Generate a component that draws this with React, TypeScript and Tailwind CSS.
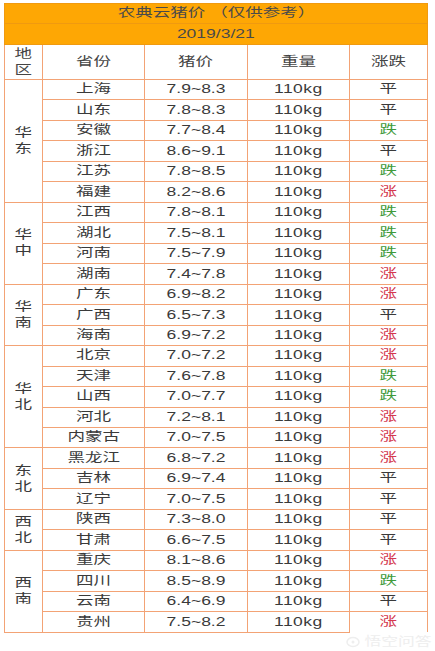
import React from "react";

type Row = [string, string, string];
const groups: { region: string; rows: Row[] }[] = [
  { region: "华东", rows: [["上海", "7.9~8.3", "平"], ["山东", "7.8~8.3", "平"], ["安徽", "7.7~8.4", "跌"], ["浙江", "8.6~9.1", "平"], ["江苏", "7.8~8.5", "跌"], ["福建", "8.2~8.6", "涨"]] },
  { region: "华中", rows: [["江西", "7.8~8.1", "跌"], ["湖北", "7.5~8.1", "跌"], ["河南", "7.5~7.9", "跌"], ["湖南", "7.4~7.8", "涨"]] },
  { region: "华南", rows: [["广东", "6.9~8.2", "涨"], ["广西", "6.5~7.3", "平"], ["海南", "6.9~7.2", "涨"]] },
  { region: "华北", rows: [["北京", "7.0~7.2", "涨"], ["天津", "7.6~7.8", "跌"], ["山西", "7.0~7.7", "跌"], ["河北", "7.2~8.1", "涨"], ["内蒙古", "7.0~7.5", "涨"]] },
  { region: "东北", rows: [["黑龙江", "6.8~7.2", "涨"], ["吉林", "6.9~7.4", "平"], ["辽宁", "7.0~7.5", "平"]] },
  { region: "西北", rows: [["陕西", "7.3~8.0", "平"], ["甘肃", "6.6~7.5", "平"]] },
  { region: "西南", rows: [["重庆", "8.1~8.6", "涨"], ["四川", "8.5~8.9", "跌"], ["云南", "6.4~6.9", "平"], ["贵州", "7.5~8.2", "涨"]] },
];

function T({ children, className = "" }: { children: React.ReactNode; className?: string }) {
  return <span className={"inline-block scale-x-[1.4] whitespace-nowrap " + className}>{children}</span>;
}

function Stack({ text }: { text: string }) {
  return (
    <div className="flex flex-col items-center leading-[16px]">
      {text.split("").map((c, i) => (
        <T key={i}>{c}</T>
      ))}
    </div>
  );
}

const cell = "border border-[#f3a375] p-0 text-center align-middle";
const hcell = "border border-[#f09a10] p-0 text-center align-middle bg-[#fea704] text-[#4a4a4a]";

function trendColor(t: string) {
  if (t === "涨") return "text-[#d4394f]";
  if (t === "跌") return "text-[#3e9a3a]";
  return "text-[#3a3a3a]";
}

export default function App() {
  const total = groups.reduce((a, g) => a + g.rows.length, 0);
  let idx = 0;
  return (
    <div
      className="relative w-[435px] h-[651px] bg-white overflow-hidden pt-[3px] pl-[4px] text-[12.5px] text-[#3a3a3a]"
      style={{ fontFamily: '"Liberation Sans", "Noto Sans CJK SC", sans-serif' }}
    >
      <table className="border-collapse table-fixed w-[423px]">
        <colgroup>
          <col className="w-[38px]" />
          <col className="w-[102px]" />
          <col className="w-[103px]" />
          <col className="w-[102px]" />
          <col className="w-[78px]" />
        </colgroup>
        <tbody>
          <tr className="h-[20px]">
            <td colSpan={5} className={hcell}>
              <T>农典云猪价 （仅供参考）</T>
            </td>
          </tr>
          <tr className="h-[21px]">
            <td colSpan={5} className={hcell}>
              <T>2019/3/21</T>
            </td>
          </tr>
          <tr className="h-[35px] text-[#444]">
            <td className={cell}>
              <Stack text="地区" />
            </td>
            <td className={cell}>
              <T>省份</T>
            </td>
            <td className={cell}>
              <T>猪价</T>
            </td>
            <td className={cell}>
              <T>重量</T>
            </td>
            <td className={cell}>
              <T>涨跌</T>
            </td>
          </tr>
          {groups.map((g) =>
            g.rows.map((r, i) => {
              idx++;
              const last = idx === total;
              return (
                <tr key={g.region + i} className="h-[20.48px]">
                  {i === 0 && (
                    <td rowSpan={g.rows.length} className={cell}>
                      <Stack text={g.region} />
                    </td>
                  )}
                  <td className={cell}>
                    <T>{r[0]}</T>
                  </td>
                  <td className={cell}>
                    <T>{r[1]}</T>
                  </td>
                  <td className={cell}>
                    <T className="tracking-[0.3px]">110kg</T>
                  </td>
                  <td className={cell + (last ? " border-b-0" : "")}>
                    <T className={trendColor(r[2])}>{r[2]}</T>
                  </td>
                </tr>
              );
            })
          )}
        </tbody>
      </table>
      <div className="absolute left-[346px] top-[633px] flex items-center gap-[4px] text-[12px] text-[#eeeeee]">
        <svg width="14" height="12" viewBox="0 0 14 12">
          <ellipse cx="7" cy="6" rx="6" ry="4.5" fill="none" stroke="#eeeeee" strokeWidth="1.5" />
          <circle cx="7" cy="6" r="1.5" fill="#eeeeee" />
        </svg>
        <T className="ml-[10px]">悟空问答</T>
      </div>
    </div>
  );
}
